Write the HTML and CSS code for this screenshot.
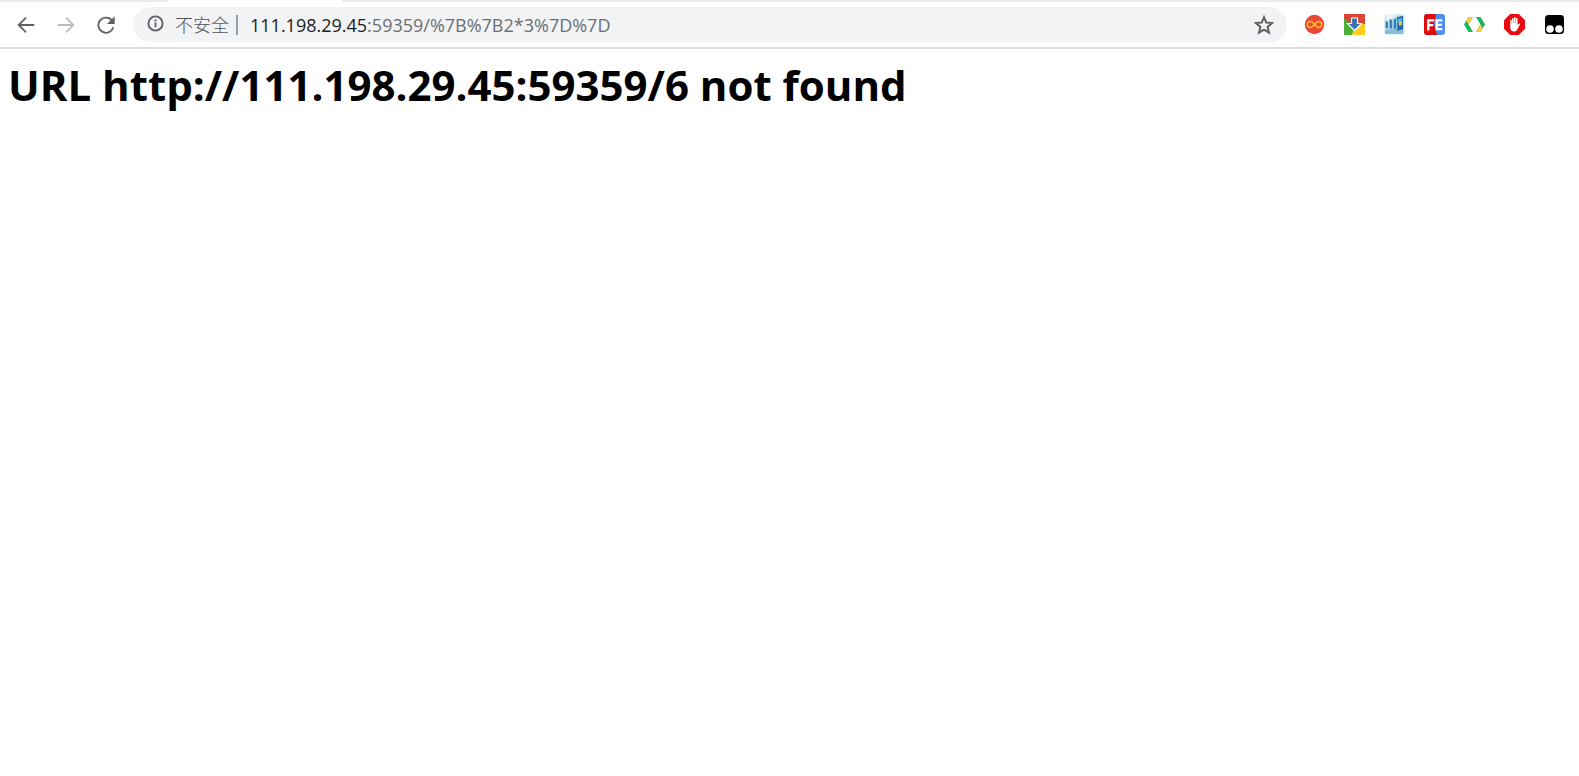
FILE: index.html
```html
<!DOCTYPE html>
<html lang="zh-CN">
<head>
<meta charset="utf-8">
<title>URL not found</title>
<link rel="stylesheet" href="styles.css">
</head>
<body>
<header class="browser">
  <div class="tabstrip"><div class="tab-before"></div><div class="tab"></div><div class="tab-after"></div></div>
  <nav class="toolbar">
    <button class="tool" type="button" aria-label="Back">
      <svg class="glyph" viewBox="0 0 24 24"><path d="M21 12H4.500M12 4L4 12l8 8" /></svg>
    </button>
    <button class="tool tool-off" type="button" aria-label="Forward" disabled>
      <svg class="glyph" viewBox="0 0 24 24"><path d="M3 12h16.500M12 4l8 8-8 8" /></svg>
    </button>
    <button class="tool" type="button" aria-label="Reload">
      <svg class="glyph" viewBox="0 0 24 24"><path d="M18.500 7A8.300 8.300 0 1 0 20 14.500" /><path class="solid" d="M21.500 2.500v8.500H13z" /></svg>
    </button>
    <div class="omnibox">
      <button class="security" type="button">
        <svg class="info" viewBox="0 0 18 18"><circle cx="9" cy="9" r="7.500" /><path d="M9 8v5M9 4.800v2" /></svg>
        <span>不安全</span>
      </button>
      <span class="divider"></span>
      <label class="host" for="address">111.198.29.45</label>
      <input class="address" id="address" type="text" value=":59359/%7B%7B2*3%7D%7D" spellcheck="false">
      <button class="star" type="button" aria-label="Bookmark">
        <svg class="star-icon" viewBox="0 0 20 20"><path d="M10 2.200l2.200 5.400 5.800.5-4.400 3.800 1.300 5.700-4.900-3-4.900 3 1.300-5.700L2 8.100l5.800-.5z" /></svg>
      </button>
    </div>
    <div class="extensions">
      <button class="tool" type="button" aria-label="Infinity">
        <svg class="ext" viewBox="0 0 21 21"><circle cx="10.500" cy="10.500" r="9.700" fill="#e9473a"/><path d="M10.500 10.500C8.700 8.200 7.800 7.500 6.300 7.500a3 3 0 0 0 0 6c1.500 0 2.400-.7 4.200-3s2.700-3 4.200-3a3 3 0 0 1 0 6c-1.500 0-2.400-.7-4.200-3z" fill="none" stroke="#fdc413" stroke-width="1.600"/></svg>
      </button>
      <button class="tool" type="button" aria-label="Downloads">
        <svg class="ext" viewBox="0 0 21 21"><path fill="#db4437" d="M0 0h21v10H0z"/><path fill="#4caf36" d="M0 4l10.500 10L8 21H0z"/><path fill="#ffcd1c" d="M21 10v11H8l4-8 3-3z"/><path d="M7.500 4h6v5.500h4l-7 7-7-7h4z" fill="#2f73b3" stroke="#fff" stroke-width="1.200"/></svg>
      </button>
      <button class="tool" type="button" aria-label="Network panels">
        <svg class="ext" viewBox="0 0 21 21"><rect x=".5" y=".5" width="20" height="20" rx="2" fill="#c6e3f0"/><path fill="#e8f5f8" d="M1 1h11L3 8z"/><path fill="#86bddb" d="M1 16l18-3v7H1z"/><path fill="#3a80b8" d="M1.500 7l3 1v7l-3-1zM5.500 5l3 1v9l-3-1z"/><path fill="#2a7ec0" d="M9.500 6l4-3v13l-4-2z"/><path fill="#2465a4" d="M13 3l6-1v13l-6 2z"/><path fill="#59b9d8" d="M14 5l4-1v4l-4 1z"/><path fill="#e2c84e" d="M15 8l3-1v4l-3 1z"/><path stroke="#b4d9ea" d="M4.500 8v7M8.800 6v9M12.800 4v12" /></svg>
      </button>
      <button class="tool" type="button" aria-label="FeHelper">
        <svg class="ext" viewBox="0 0 21 21"><rect width="21" height="21" rx="3" fill="#4e8ef0"/><path fill="#df0c0c" d="M3 0h9L10 10l3 11H3a3 3 0 0 1-3-3V3a3 3 0 0 1 3-3z"/><path d="M4.300 16.500V6.300h6M4.300 11.200h5M18.300 6.300h-5.600v8.900h5.600M12.700 10.800h5" fill="none" stroke="#fff" stroke-width="2.300"/></svg>
      </button>
      <button class="tool" type="button" aria-label="Code">
        <svg class="ext" viewBox="0 0 21 21"><path fill="#16b45c" d="M0 10.500L4.500 3H9l-4.500 7.500L9 18H4.500z"/><path fill="#fbca43" d="M4.500 3H9l-4.500 7.500L2.200 6.800z"/><path fill="#16b45c" d="M21 10.500L16.500 3H12l4.500 7.500L12 18h4.500z"/><path fill="#fbca43" d="M12 18h4.500l2.300-3.700-2.300-3.800z"/></svg>
      </button>
      <button class="tool" type="button" aria-label="Adblock">
        <svg class="ext" viewBox="0 0 21 21"><path fill="#e40d12" d="M6.200 0h8.600L21 6.200v8.600L14.800 21H6.200L0 14.800V6.200z"/><path fill="#fff" d="M6.300 6.500c0-1 1.400-1 1.400 0v3h.4V4.700c0-1 1.500-1 1.500 0V9h.4V3.900c0-1.100 1.600-1.100 1.600 0V9h.4V4.800c0-1 1.500-1 1.500 0v6.400l1.200-1.400c.8-.8 1.700-.2 1.200.7l-2.600 4.900c-.7 1.300-1.600 2-3.300 2-2.500 0-3.700-1.500-3.700-4z"/></svg>
      </button>
      <button class="tool" type="button" aria-label="Tampermonkey">
        <svg class="ext" viewBox="0 0 21 21"><rect x="1" y="1" width="19" height="19" rx="3.500"/><circle cx="6" cy="15" r="3.800" fill="#fff"/><circle cx="15" cy="15" r="3.800" fill="#fff"/></svg>
      </button>
    </div>
  </nav>
</header>
<main class="page">
  <h1 class="message">URL http://111.198.29.45:59359/6 not found</h1>
</main>
</body>
</html>
```
FILE: styles.css
```css
* { box-sizing: border-box; }
body {
  margin: 0;
  background: #fff;
  color: #000;
  font-family: "Open Sans", "Noto Sans", "Noto Sans CJK SC", sans-serif;
}
button {
  padding: 0;
  border: 0;
  background: none;
  font: inherit;
  color: inherit;
}
.browser { border-bottom: 2px solid #dadce0; }
.tabstrip { display: flex; height: 2px; }
.tab-before { width: 168px; background: #e8eaed; border-bottom-right-radius: 2px; }
.tab { width: 174px; }
.tab-after { flex: 1; background: #e8eaed; border-bottom-left-radius: 2px; }
.toolbar {
  display: flex;
  align-items: center;
  height: 45px;
  padding: 0 5px 0 6px;
}
.tool {
  display: flex;
  flex: none;
  align-items: center;
  justify-content: center;
  width: 40px;
  height: 36px;
}
.glyph {
  width: 22px;
  height: 22px;
  fill: none;
  stroke: #5f6368;
  stroke-width: 2;
}
.glyph .solid { fill: #5f6368; stroke: none; }
.tool-off .glyph { stroke: #babcbe; }
.omnibox {
  display: flex;
  flex: 1;
  align-items: center;
  min-width: 0;
  height: 35px;
  margin: 0 7px;
  padding: 0 13px 0 14px;
  border-radius: 18px;
  background: #f1f3f4;
  color: #6b6f73;
  font-size: 18px;
  line-height: 26px;
}
.security {
  display: flex;
  flex: none;
  align-items: center;
  gap: 11px;
  color: #4f5357;
  font-family: "Noto Sans CJK SC", sans-serif;
  font-weight: 300;
  line-height: 24px;
  padding-bottom: 2px;
}
.info {
  width: 17px;
  height: 17px;
  fill: none;
  stroke: #5f6368;
  stroke-width: 2;
}
.divider {
  flex: none;
  width: 2px;
  height: 20px;
  margin: 0 12px 0 7px;
  background: #9a9da1;
}
.host { flex: none; color: #202124; }
.address {
  flex: 1;
  min-width: 0;
  padding: 0;
  border: 0;
  outline: 0;
  background: none;
  color: inherit;
  font: inherit;
}
.star { display: flex; flex: none; }
.star-icon {
  width: 20px;
  height: 20px;
  fill: none;
  stroke: #5f6368;
  stroke-width: 2;
}
.extensions { display: flex; flex: none; }
.ext { width: 21px; height: 21px; }
.page { padding: 8px; }
.message {
  margin: 0;
  font-size: 42px;
  line-height: 56px;
  font-weight: 700;
}
```
